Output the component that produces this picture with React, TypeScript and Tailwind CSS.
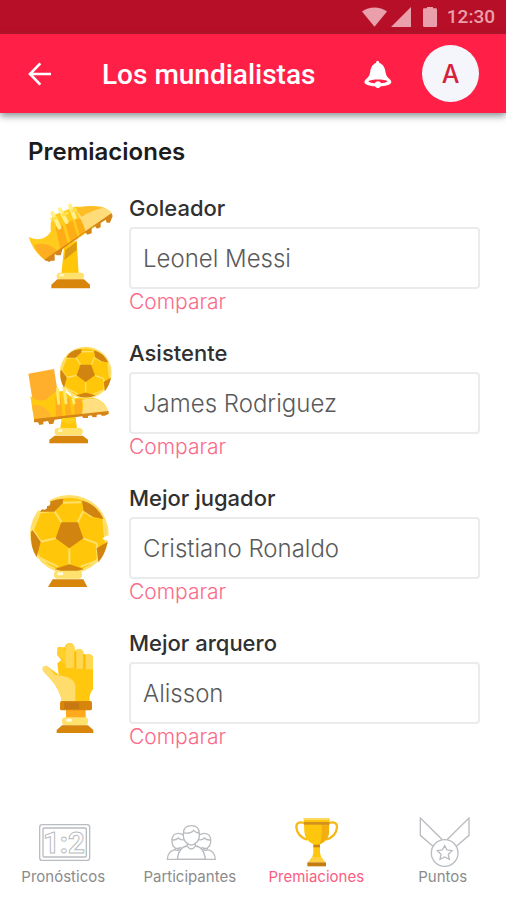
import type { ReactNode } from 'react';

function StatusBar() {
  return (
    <div className="flex h-[34px] items-center justify-end bg-[#b60f27] pr-[11px] text-[#e9a0ab]">
      <svg viewBox="0 0 76 60" className="mr-1 h-5 w-[25px]" fill="currentColor" aria-hidden="true">
        <path d="M0 13C22-3 54-3 76 13L38 60Z" />
      </svg>
      <svg viewBox="0 0 60 60" className="mr-3 size-5" fill="currentColor" aria-hidden="true">
        <path d="M60 0V60H0Z" />
      </svg>
      <svg viewBox="0 0 42 60" className="mr-[10px] h-5 w-[14px]" fill="currentColor" aria-hidden="true">
        <path d="M3 4H12V0H30V4H39Q42 4 42 8V56Q42 60 38 60H4Q0 60 0 56V8Q0 4 3 4Z" />
      </svg>
      <span className="font-[Roboto,sans-serif] text-[19px] leading-6 font-medium">12:30</span>
    </div>
  );
}

function Header() {
  return (
    <header className="flex h-[79px] items-center bg-[#ff1f47] pr-[27px] pl-7 text-white shadow-[0_3px_7px_rgba(60,75,80,0.6)]">
      <button type="button" aria-label="Volver" className="shrink-0">
        <svg viewBox="0 0 72 72" className="size-6" fill="none" stroke="currentColor" strokeWidth="8" aria-hidden="true">
          <path d="M37 4L6 36L37 68M6 36H69" />
        </svg>
      </button>
      <h1 className="ml-[50px] flex-1 truncate pt-0.5 font-[Roboto,sans-serif] text-[28px] leading-8 font-medium">
        Los mundialistas
      </h1>
      <button type="button" aria-label="Notificaciones" className="mr-[30px] shrink-0">
        <svg viewBox="0 0 82 82" className="size-7" aria-hidden="true">
          <path
            fill="currentColor"
            d="M40 2C43 2 45 5 45 9C57 13 61 23 63 36C65 47 70 52 77 58C84 66 78 71 68 74C60 76 54 77 49 77C47 81 44 82 41 82C37 82 34 81 32 77C24 77 18 75 11 73C1 70-2 64 5 57C12 52 16 47 18 36C20 23 24 13 35 9C35 5 37 2 40 2Z"
          />
          <path fill="#ff1f47" d="M12 62C22 55 60 55 70 62C64 66 57 67 50 68C48 60 34 60 32 68C24 67 17 66 12 62Z" />
        </svg>
      </button>
      <button
        type="button"
        aria-label="Perfil"
        className="size-[57px] shrink-0 rounded-full bg-[#f5f6fc] text-[25px] leading-8 font-medium text-[#d9213f]"
      >
        A
      </button>
    </header>
  );
}

/* Soccer ball centred on 0,0 with a radius of 118 */
function Ball() {
  return (
    <>
      <circle r="118" fill="#ffe06a" />
      <circle r="110" fill="#ffc60a" />
      <path
        d="M-23-36L-45-70M25-36L42-70M42 12L82 27M0 42V92M-41 12L-86 22M-45-70L-88-66M-20-95L35-96M42-70L70-52M102-45L108 20M82 27L85 78M85 78L34 97M-34 97L-95 68M-86 22L-108-12M-88-66L-110-12"
        stroke="#ffe06a"
        strokeWidth="6"
        fill="none"
      />
      <g fill="#d18410">
        <path d="M-24-36H25L42 12L0 42L-41 12Z" />
        <path d="M-76-86Q-50-108-18-106L-20-93L-45-68L-88-68Z" />
        <path d="M38-101Q80-92 103-46L70-53L43-70Z" />
        <path d="M-110-12L-86 22L-98 69Q-118 38-115-8Z" />
        <path d="M115 22L82 42L87 84Q108 60 115 22Z" />
        <path d="M-44 104L0 90L44 104Q0 122-44 104Z" />
      </g>
    </>
  );
}

function GoldenBoot() {
  return (
    <>
      <path d="M133 165L170 152L176 252H124Z" fill="#ffc60a" />
      <path d="M136 180L170 155V180L133 210Z" fill="#dc9a12" />
      <path d="M92 100L100 76L165 50H245Q272 60 277 74L78 212Q42 190 26 141Q70 160 92 125Z" fill="#ffcb1c" />
      <path d="M42 166Q78 150 114 184L78 212Q54 194 42 166Z" fill="#ffae22" />
      <path d="M106 112L128 106L145 165L122 180ZM135 98L158 92L174 145L153 160ZM165 88L185 86L196 124L180 139Z" fill="#ffad16" />
      <path d="M164 58Q190 46 232 49Q268 55 277 74L198 127Q184 86 164 58Z" fill="#ffdc78" />
      <path d="M164 56Q205 42 250 53Q216 60 185 80Z" fill="#ffbd24" />
      <path d="M97 69L118 112M120 58L140 96M150 47L164 82" stroke="#fff08c" strokeWidth="12" strokeLinecap="round" />
      <path d="M92 88L112 82M126 76L144 68M154 63L170 58" stroke="#ffe24a" strokeWidth="9" />
      <path d="M73 209L274 70L278 78L270 98H260L257 89L242 99V112L231 116L225 108L215 115V130L202 134L196 127L128 176L122 196H110L104 191V212H92L88 216Z" fill="#d58616" />
      <rect x="110" y="248" width="82" height="20" rx="9" fill="#ffe16e" />
      <rect x="118" y="252" width="14" height="7" rx="3" fill="#fff8c4" />
      <path d="M112 268H192L210 284V295H94V284Z" fill="#d8860b" />
    </>
  );
}

function BootAndBall() {
  return (
    <>
      <path d="M126 245H166L172 285H120Z" fill="#ffc60a" />
      <path d="M25 116L102 102L116 190L40 210Z" fill="#ffaf2c" />
      <path d="M31 182Q48 202 78 194L106 170L130 168L160 190L205 186Q255 190 265 232L42 255Z" fill="#ffc90f" />
      <path d="M36 210Q76 204 96 246L44 255Z" fill="#ffb52c" />
      <path d="M106 186H122L128 244H108ZM134 190H148L155 242H137ZM162 194L186 192V238L164 241Z" fill="#ffad1e" />
      <path d="M186 195Q246 176 266 232L184 240Q194 214 186 195Z" fill="#ffdf80" />
      <path d="M112 162L116 205M132 158L138 204M155 166L162 204" stroke="#ffe96a" strokeWidth="9" strokeLinecap="round" />
      <g transform="translate(197 113) scale(0.66)">
        <Ball />
      </g>
      <path d="M42 252L266 228V237L254 242H246L240 238L230 240V246L218 247L214 241L204 243V249H190L186 244L104 254L100 266L88 268L84 258L70 260V268L58 270L54 262H42Z" fill="#d58616" />
      <path d="M126 250L168 247V258Q146 276 126 257Z" fill="#ffd018" />
      <rect x="104" y="279" width="84" height="22" rx="10" fill="#ffe16e" />
      <rect x="114" y="283" width="14" height="8" rx="4" fill="#fff8c4" />
      <path d="M104 302H188L204 314V325H88V314Z" fill="#d8860b" />
    </>
  );
}

function BallTrophy() {
  return (
    <>
      <g transform="translate(148 148)">
        <Ball />
      </g>
      <path d="M44 46L70 54L82 48Q92 48 91 56Q90 63 81 63Q82 74 73 74Q66 70 61 78L46 72Z" fill="#fff" />
      <path d="M272 151L262 152Q252 155 247 161Q253 165 260 166L272 171Z" fill="#fff" />
      <rect x="102" y="257" width="84" height="24" rx="10" fill="#ffe16e" />
      <rect x="112" y="262" width="18" height="9" rx="4" fill="#fffbe0" />
      <path d="M98 283H190L202 306H84Z" fill="#d8860b" />
    </>
  );
}

function GoldenGlove() {
  return (
    <>
      <path d="M138 236H197V268H138Z" fill="#ffa91c" />
      <path d="M126 215Q120 180 94 150L69 122Q64 108 80 107L116 134L112 100L124 90L111 74Q112 52 134 52Q138 38 152 39Q164 41 164 62Q182 50 190 66V76Q218 66 219 84V178Q208 188 208 215Z" fill="#ffc80e" />
      <path d="M112 60Q110 46 128 52L137 66V98H124L128 88L111 74Z" fill="#ffd02a" />
      <path d="M69 122Q64 106 80 107Q94 118 104 134Q164 138 166 168V215H126Q120 180 94 150Z" fill="#ffdc6c" />
      <path d="M137 52Q142 38 152 39Q164 42 164 56V114H137ZM168 62Q178 50 190 64V116H168ZM196 76Q212 68 219 82V118H196Z" fill="#ffd750" />
      <path d="M166 66V114M193 72V116" stroke="#ffbb00" strokeWidth="6" />
      <rect x="120" y="213" width="96" height="28" rx="5" fill="#d8860b" />
      <path d="M132 217H178V237H132Z" fill="#c87810" />
      <rect x="126" y="262" width="78" height="24" rx="10" fill="#ffe16e" />
      <rect x="138" y="266" width="18" height="9" rx="4" fill="#fffbe0" />
      <path d="M126 286H204L220 300V309H110V300Z" fill="#d8860b" />
    </>
  );
}

type Award = {
  id: string;
  label: string;
  player: string;
  viewBox: string;
  art: ReactNode;
};

const awards: Award[] = [
  { id: 'goleador', label: 'Goleador', player: 'Leonel Messi', viewBox: '24 15 264 330', art: <GoldenBoot /> },
  { id: 'asistente', label: 'Asistente', player: 'James Rodriguez', viewBox: '24 15 264 330', art: <BootAndBall /> },
  { id: 'jugador', label: 'Mejor jugador', player: 'Cristiano Ronaldo', viewBox: '24 0 264 330', art: <BallTrophy /> },
  { id: 'arquero', label: 'Mejor arquero', player: 'Alisson', viewBox: '24 0 264 330', art: <GoldenGlove /> },
];

function AwardRow({ award }: { award: Award }) {
  return (
    <li className="flex gap-[13px]">
      <svg viewBox={award.viewBox} className="h-[110px] w-[88px] shrink-0" aria-hidden="true">
        {award.art}
      </svg>
      <div className="flex min-w-0 flex-1 flex-col items-start">
        <label htmlFor={award.id} className="text-[22px] leading-[26px] font-medium text-[#303030]">
          {award.label}
        </label>
        <input
          id={award.id}
          type="text"
          defaultValue={award.player}
          className="mt-1.5 h-[62px] w-full rounded-[4px] border-2 border-[#e9ebec] bg-white px-3 text-[24px] font-light text-[#5a5a5a] outline-none"
        />
        <a href="#comparar" className="text-[21px] leading-[26px] font-light text-[#fb6a89]">
          Comparar
        </a>
      </div>
    </li>
  );
}

const line = '#b9bcc0';

const tabs = [
  {
    label: 'Pronósticos',
    viewBox: '94 51 192 150',
    art: (
      <g fill="none" stroke={line} strokeWidth="4">
        <rect x="120" y="74" width="150" height="107" rx="8" />
        <rect x="130" y="84" width="130" height="87" rx="3" />
        <text
          x="193"
          y="160"
          textAnchor="middle"
          strokeWidth="3"
          className="font-[Roboto,sans-serif] text-[88px] font-bold"
        >
          1:2
        </text>
      </g>
    ),
  },
  {
    label: 'Participantes',
    viewBox: '473 51 192 150',
    art: (
      <g fill="none" stroke={line} strokeWidth="4">
        <path d="M549 101Q549 77 573 77Q597 77 597 101Q598 117 590 126Q573 144 556 126Q548 117 549 101Z" />
        <path d="M551 99Q574 101 580 91Q587 99 596 99M561 130V139Q573 155 585 139V130" />
        <path d="M561 138Q535 140 531 178H615Q611 140 585 138" />
        <path d="M549 105Q537 97 525 102Q514 108 515 123Q515 138 525 144Q532 148 542 142M516 120Q528 121 534 114Q540 121 551 119M525 144V149Q531 154 537 147" />
        <path d="M597 105Q609 97 621 102Q632 108 631 123Q631 138 621 144Q614 148 604 142M595 119Q606 121 612 114Q618 121 630 120M621 144V149Q615 154 609 147" />
        <path d="M525 149Q503 152 501 178H645Q643 152 621 149" />
      </g>
    ),
  },
  {
    label: 'Premiaciones',
    viewBox: '94 51 192 150',
    active: true,
    art: (
      <>
        <path d="M156 69Q130 62 131 82Q134 110 164 119M228 69Q254 62 253 82Q250 110 220 119" fill="none" stroke="#f6b91c" strokeWidth="7" />
        <path d="M153 54H231L229 96Q228 122 202 133V158L206 174H178L182 158V133Q157 122 155 96Z" fill="#ffc60e" />
        <path d="M206 66H229V96Q228 122 202 133Q210 100 206 66Z" fill="#f2b010" />
        <path d="M153 54H231V60H153Z" fill="#ffda5c" />
        <path d="M154 66H230V74H154Z" fill="#d39120" />
        <path d="M182 134H202V142H182Z" fill="#cf8410" />
        <path d="M178 171H206L218 187H166Z" fill="#ffcf3e" />
        <path d="M164 187H220V199H164Z" fill="#c67b0e" />
      </>
    ),
  },
  {
    label: 'Puntos',
    viewBox: '473 51 192 150',
    art: (
      <g fill="none" stroke={line} strokeWidth="4">
        <circle cx="574" cy="159" r="40" />
        <path d="M539 139L501 106V54L567 119M581 119L647 54V106L609 139" />
        <path d="M574 137L581 150L596 152L585 163L588 178L574 171L560 178L563 163L552 152L567 150Z" />
      </g>
    ),
  },
];

function BottomNav() {
  return (
    <nav className="grid grid-cols-4 pb-3.5">
      {tabs.map((tab) => (
        <a
          key={tab.label}
          href="#"
          aria-current={tab.active ? 'page' : undefined}
          className={`flex flex-col items-center text-[15px] leading-[19px] ${tab.active ? 'text-[#fb5d7f]' : 'text-[#8b8b8b]'}`}
        >
          <svg viewBox={tab.viewBox} className="h-[50px] w-16" aria-hidden="true">
            {tab.art}
          </svg>
          {tab.label}
        </a>
      ))}
    </nav>
  );
}

export default function App() {
  return (
    <div className="flex min-h-screen flex-col bg-white font-[Inter,sans-serif]">
      <StatusBar />
      <Header />
      <main className="flex-1 pt-6 pr-[26px] pl-7">
        <h2 className="text-[24px] leading-[30px] font-semibold text-[#1c1c1c]">Premiaciones</h2>
        <ul className="mt-7 flex flex-col gap-[25px]">
          {awards.map((award) => (
            <AwardRow key={award.id} award={award} />
          ))}
        </ul>
      </main>
      <BottomNav />
    </div>
  );
}
